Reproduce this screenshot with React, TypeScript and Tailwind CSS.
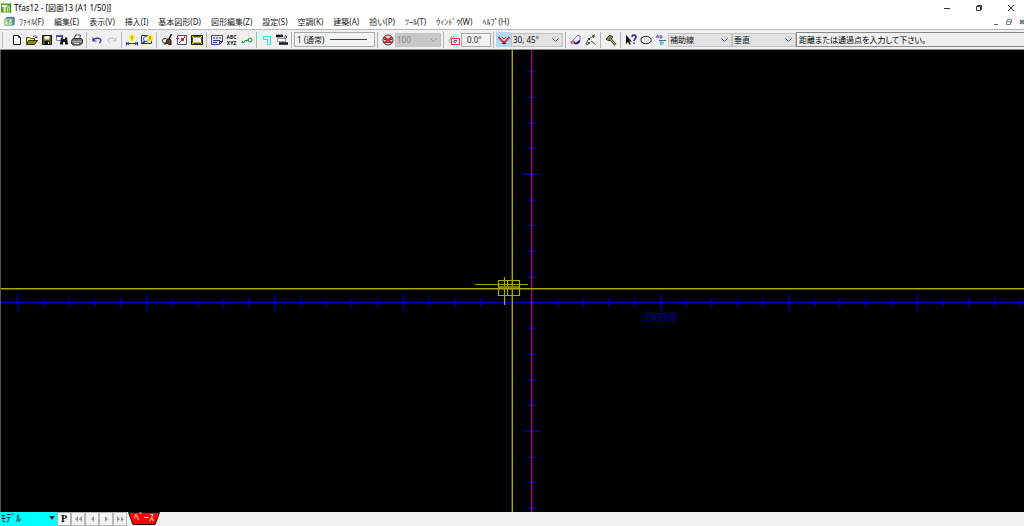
import type { ReactNode } from "react";

const menus = [
  "ﾌｧｲﾙ(F)", "編集(E)", "表示(V)", "挿入(I)", "基本図形(D)", "図形編集(Z)", "設定(S)",
  "空調(K)", "建築(A)", "拾い(P)", "ﾂｰﾙ(T)", "ｳｨﾝﾄﾞｳ(W)", "ﾍﾙﾌﾟ(H)",
];

function Tool({ label, active, children }: { label: string; active?: boolean; children: ReactNode }) {
  return (
    <button
      aria-label={label}
      className={`flex h-[15px] w-[15px] shrink-0 items-center justify-center ${active ? "bg-[#b5d7f3]" : ""}`}
    >
      <svg viewBox="0 0 12 12" className="h-3 w-3" fill="none" stroke="#222">
        {children}
      </svg>
    </button>
  );
}

function Separator() {
  return (
    <div className="flex h-4 w-[5px] shrink-0 justify-center">
      <div className="w-px bg-[#b4b4b4]" />
    </div>
  );
}

function Combo({ label, value, className, disabled }: { label: string; value: string; className: string; disabled?: boolean }) {
  return (
    <div className={`relative h-[14px] shrink-0 border ${disabled ? "border-[#c4c4c4] bg-[#c8c8c8] text-[#858585]" : "border-[#c2c2c2] bg-[#e2e2e2] text-[#111]"} ${className}`}>
      <select aria-label={label} disabled={disabled} className="block h-3 w-full appearance-none bg-transparent pl-px leading-3 opacity-100 outline-none">
        <option>{value}</option>
      </select>
      <svg viewBox="0 0 7 4" className="pointer-events-none absolute top-1 right-[3px] h-1 w-[7px]" fill="none" stroke={disabled ? "#999" : "#555"}>
        <path d="M.5.5l3 3 3-3" />
      </svg>
    </div>
  );
}

function AppIcon({ small }: { small?: boolean }) {
  return small ? (
    <svg viewBox="0 0 12 12" className="h-3 w-[11px]">
      <path d="M3 1h8v8H3z" fill="#4c8ed8" stroke="#3764a0" />
      <path d="M1 2.500h8v7H1z" fill="#e3f3c9" stroke="#5f9a86" />
      <path d="M2.500 4.500h4M4.500 4.500v4M6.500 7.500l1.500-2" stroke="#3c9a38" />
    </svg>
  ) : (
    <svg viewBox="0 0 12 12" className="h-3 w-[11px]">
      <path d="M0 1h11v10H0z" fill="#5ba51b" />
      <path d="M1 3h6v2H5v5H3V5H1z" fill="#fff" />
      <path d="M7 6l2-2v3h1v1H9v2M7 10V6" stroke="#e4f3a0" fill="none" />
      <path d="M10 1h1v10h-1z" fill="#1f7a36" />
    </svg>
  );
}

const STEP = 25.7;
const range = (from: number, to: number) => Array.from({ length: to - from + 1 }, (_, i) => from + i);

function Drawing() {
  return (
    <svg viewBox="0 0 1024 462" preserveAspectRatio="xMidYMid slice" className="h-full w-full" role="img" aria-label="図面">
      <g stroke="#0000a8" strokeWidth="1.4">
        <path d="M0 252.700h1024" />
        {range(-20, 19).filter((i) => i !== 0).map((i) => {
          const x = Math.round(531 + i * STEP) + 0.7;
          const r = i % 5 === 0 ? 8.5 : 4.5;
          return <path key={i} d={`M${x} ${252.5 - r}v${r * 2}`} />;
        })}
        {range(-9, 8).filter((i) => i !== 0).map((i) => {
          const y = Math.round(252.5 + i * STEP) + 0.3;
          const r = i % 5 === 0 ? 8.5 : 4.5;
          return <path key={i} d={`M${531.5 - r} ${y}h${r * 2}`} />;
        })}
      </g>
      <path d="M531.700 0v462" stroke="#a000a0" strokeWidth="1.4" />
      <text x="644" y="271" fill="#0000b0" fontSize="10" fontFamily="'Liberation Sans', sans-serif">250000</text>
      <g stroke="#a8a800" fill="none">
        <path d="M0 238.700h1024M512.300 0v462" strokeWidth="1.4" />
        <path d="M475 234.500h53M504.500 227v28M507.500 230v16M498.500 230.500h21v15h-21z" strokeWidth="1.2" />
        <path d="M499 236.500h20M499 237.500h20" stroke="#7c7c00" />
      </g>
      <path d="M.5 0v462" stroke="#555" />
    </svg>
  );
}

export default function App() {
  return (
    <div className="flex h-screen flex-col overflow-hidden bg-[#f0f0f0] font-['Noto_Sans','Noto_Sans_CJK_JP',sans-serif] text-[8px] leading-3 text-[#222]">
      <header className="flex h-[15px] shrink-0 items-center bg-white pl-px">
        <AppIcon />
        <h1 className="ml-0.5 flex-1 leading-[15px] whitespace-nowrap text-black">Tfas12 - [図面13 (A1 1/50)]</h1>
        <div className="flex gap-1.5">
          <button aria-label="最小化" className="flex w-[26px] justify-center">
            <svg viewBox="0 0 8 8" className="h-2 w-2" stroke="#333"><path d="M1 4.500h6" /></svg>
          </button>
          <button aria-label="元に戻す" className="flex w-[26px] justify-center">
            <svg viewBox="0 0 8 8" className="h-2 w-2" fill="none" stroke="#333"><path d="M1.500 2.500h4v4h-4zM2.500 2.500v-1h4v4h-1" /></svg>
          </button>
          <button aria-label="閉じる" className="flex w-[26px] justify-center">
            <svg viewBox="0 0 8 8" className="h-2 w-2" stroke="#333"><path d="M1 1l6 6M7 1l-6 6" /></svg>
          </button>
        </div>
      </header>

      <nav className="flex h-[14px] shrink-0 items-center bg-white pl-1">
        <AppIcon small />
        <div className="ml-1 flex flex-1 gap-[10px] whitespace-nowrap">
          {menus.map((m) => <button key={m}>{m}</button>)}
        </div>
        <div className="-mr-0.5 flex gap-[5px]">
          <button aria-label="図面を最小化" className="w-2">
            <svg viewBox="0 0 8 8" className="h-2 w-2" stroke="#52657a"><path d="M2 6.500h4" /></svg>
          </button>
          <button aria-label="図面を元に戻す" className="w-2">
            <svg viewBox="0 0 8 8" className="h-2 w-2" fill="none" stroke="#718398"><path d="M1.500 3.500h4v3h-4zM2.500 3V1.500h4v3H6" /></svg>
          </button>
          <button aria-label="図面を閉じる" className="w-2">
            <svg viewBox="0 0 8 8" className="h-2 w-2" stroke="#52657a" strokeWidth="1.500"><path d="M2 2l4 4M6 2L2 6" /></svg>
          </button>
        </div>
      </nav>

      <div role="toolbar" aria-label="ツールバー" className="flex h-[21px] shrink-0 items-center border-t border-b border-t-[#b9b9b9] border-b-[#8a8a8a] pl-0.5">
        <div className="mr-1.5 h-4 w-px shrink-0 bg-[#bbb]" />
        <Tool label="新規作成"><path d="M2.500 1.500h5l2 2v7h-7zM7.500 1.500v2h2" fill="#fff" /></Tool>
        <Tool label="開く">
          <path d="M.5 10V3.500h3l1 1h4V6" fill="#efe45c" stroke="#555014" />
          <path d="M.5 10.500l2-4h9l-3 4z" fill="#8d8414" stroke="#37340a" />
          <path d="M7 2.500c2-1.500 3-.5 3.500 1M9 3.500h2V2" stroke="#333" strokeWidth=".8" />
        </Tool>
        <Tool label="保存">
          <path d="M1.500 1.500h9v9h-9z" fill="#66661b" stroke="#111" />
          <path d="M3.500 2h5v3.500h-5z" fill="#f5f5f5" stroke="none" />
          <path d="M3.500 7h5v3.500h-5z" fill="#111" stroke="none" /><path d="M7.500 8v2" stroke="#eee" />
        </Tool>
        <Tool label="検索">
          <path d="M.5 2.500h6v4h-6z" fill="#fff" stroke="#7d88c0" /><path d="M0 2h7" stroke="#2430a0" strokeWidth="1.500" />
          <path d="M5 3.500h2V5h2V3.500h2l1 7H9V8H7v2.500H4z" fill="#111" stroke="none" />
        </Tool>
        <Tool label="印刷">
          <path d="M3 5l1.500-4h5L8.500 5" fill="#fff" stroke="#444" />
          <path d="M1 5.500L2.500 4.500h8l1 1V9l-2 2H2L.5 9.500z" fill="#777" stroke="#333" />
          <path d="M1 7.500h10" stroke="#aaa" /><path d="M3 9.500h5" stroke="#ddd" />
        </Tool>
        <Separator />
        <Tool label="元に戻す"><path d="M2 3.500v3.500h3.500M2 7c1-3.500 8-4 8-.5 0 1-1 2-2 2.500" stroke="#3030a8" strokeWidth="1.200" /></Tool>
        <Tool label="やり直し"><path d="M10 3.500v3.500H6.500M10 7C9 3.500 2 3 2 6.500c0 1 1 2 2 2.500" stroke="#bcbcbc" /></Tool>
        <Separator />
        <Tool label="寸法">
          <path d="M6 0l2.500 2v3L7 7H5L3.500 5V2z" fill="#fff200" stroke="none" /><path d="M6 2v3.500" stroke="#8c7900" />
          <path d="M.5 8v3.500M11.500 8v3.500M1 9.500h10" stroke="#3030a8" /><path d="M3 8L1 9.500 3 11M9 8l2 1.500L9 11" stroke="#3030a8" strokeWidth=".8" />
        </Tool>
        <Tool label="図面表示">
          <path d="M.5 1.500h10v8H.5z" fill="#dbe4ff" stroke="#2838a8" />
          <path d="M1 10l4-4" stroke="#222" strokeWidth="1.500" /><circle cx="5" cy="5" r="2.500" fill="#fff" stroke="#4050b5" />
          <path d="M9 0l3 2v4L9 8 6 6V2z" fill="#ffee16" stroke="none" /><path d="M9 2v3.500" stroke="#665800" />
        </Tool>
        <Separator />
        <Tool label="再描画">
          <path d="M10.500 0L8 5" stroke="#111" strokeWidth="1.500" /><path d="M6 5l4 1v5L5 9z" fill="#80391d" stroke="#221208" />
          <path d="M5 4.500C2 4 1 6 1.500 7.500S3 9.500 5 9.500M3.500 8L5 9.500 3.500 11" stroke="#222" />
        </Tool>
        <Tool label="部分拡大">
          <path d="M1.500 1.500h9v9h-9z" fill="#fff" stroke="#50508c" />
          <path d="M0 4.500h3M8.500 1v3" stroke="#d42525" /><path d="M3 9l4-4" stroke="#444" /><path d="M5 4h3v3H5z" fill="#d52b2b" stroke="none" />
        </Tool>
        <Tool label="全体表示">
          <path d="M.5 1.500h11v9H.5z" fill="#5f5b0b" stroke="#222" /><path d="M3 3.500h6l1 1v3l-1 1H3l-1-1v-3z" fill="#fff" stroke="none" />
          <path d="M1 2l2 2M11 2L9 4M1 10l2-2M11 10L9 8" stroke="#fff23b" />
        </Tool>
        <Separator />
        <Tool label="文字">
          <path d="M.5 1.500h11v6l-3 3h-8z" fill="#e5e7ff" stroke="#4444a0" /><path d="M2 4h2M5 4h2M8 4h2M2 6.500h7M2 8.500h4" stroke="#303090" /><path d="M8.500 10.500v-3h3" stroke="#333" />
        </Tool>
        <button aria-label="文字置換" className="flex h-[15px] w-[15px] shrink-0 flex-col items-center justify-center text-[5px] leading-[6px] font-bold text-[#222]">
          <span>ABC</span><span>XYZ</span>
        </button>
        <Tool label="接続"><path d="M1 8.500h2l1-2h3" stroke="#209447" /><circle cx="9" cy="6" r="2" stroke="#209447" /><circle cx="1.500" cy="8" r=".7" stroke="#209447" /></Tool>
        <Separator />
        <Tool label="ダクト"><path d="M2.500 2.500h7v8h-3v-5h-4z" fill="#d5ffff" stroke="#32dcea" /></Tool>
        <Tool label="線種">
          <path d="M0 2h7M3 9.500h9" stroke="#111" strokeWidth="2.500" /><path d="M1.500 4.500h8v3h-8z" stroke="#999" fill="#fff" /><path d="M9 1l2 2-2 2M11 3H8" stroke="#4242a6" />
        </Tool>
        <Separator />
        <button aria-label="線の太さ" className="flex h-[15px] w-[81px] shrink-0 items-center gap-1.5 border border-[#aaa] bg-[#f3f3f3] pr-[7px] pl-0.5 whitespace-nowrap">
          <span>1 (通常)</span><span className="h-px flex-1 bg-[#444]" />
        </button>
        <Separator />
        <Tool label="縮尺解除">
          <circle cx="6" cy="6" r="5" fill="#ddd" stroke="#333" /><path d="M2 5.500h8M3 8.500h6" stroke="#444" /><path d="M2 3l8 6M10 3L2 9" stroke="#c52626" strokeWidth="1.800" />
        </Tool>
        <Combo label="縮尺" value="100" className="w-[46px]" disabled />
        <Separator />
        <Tool label="角度設定"><path d="M.5 7l4-5 3 2.500M1 7.500l3 2" stroke="#999" /><path d="M3.500 4.500h8v6h-8z" fill="#ffe9e9" stroke="#e93838" /><path d="M6 9V6.500h3L7 9" stroke="#3342b8" strokeWidth=".8" /></Tool>
        <input aria-label="角度" defaultValue="0.0°" className="h-[14px] w-[30px] shrink-0 border border-[#a8a8a8] bg-[#f3f3f3] pl-[5px] outline-none" />
        <Separator />
        <Tool label="角度拘束" active>
          <path d="M.5 3l5.500 6 5.500-6" stroke="#e04848" strokeWidth="2.400" /><path d="M1 3l2 2M4 3l2 2 2-2M9 5l2-2" stroke="#804a62" /><path d="M6 7v3M4 9.500h4" stroke="#4a2a35" />
        </Tool>
        <Combo label="拘束角度" value="30, 45°" className="w-[52px]" />
        <Separator />
        <Tool label="消去"><path d="M3 6l5-5 2 1v4L6 9H2z" fill="#f7f7ff" stroke="#7d7dc0" /><path d="M.5 7.500l3-1 2 2 5-3c0 3-2 5-5 5z" fill="#353599" stroke="none" /><path d="M0 7h4v3H1z" fill="#d27979" stroke="none" /></Tool>
        <Tool label="線編集"><path d="M1 10c1-4 4-7 9-8M10 1L7 2l2 2M2 8l3 1-4 2M6 7l4 3M3 4l2 2" stroke="#3d493d" /><path d="M8 8l3 3" stroke="#5b9f58" /></Tool>
        <Separator />
        <Tool label="設定"><path d="M1 5l4-4 3 2-4 4z" fill="#868654" stroke="#3d3d20" /><path d="M5.500 5l5 6" stroke="#35351c" strokeWidth="2.500" /><path d="M5.500 5l5 6" stroke="#d3cf91" /></Tool>
        <Separator />
        <Tool label="ヘルプ">
          <path d="M1 1v9l2-2 1.500 3 1.500-1-1.500-2.500H7z" fill="#111" stroke="none" /><path d="M7 3c0-3 4-2 4 0S9 5 9 7M9 8.500v1.500" stroke="#262696" strokeWidth="1.600" />
        </Tool>
        <Tool label="多角形"><path d="M4 2.500h4l3 2v3l-3 2H4l-3-2v-3z" stroke="#333" /></Tool>
        <Tool label="属性"><path d="M1 4l1.500-3L4 4M1.500 3h2M5 1v3h2V2H5" stroke="#3c42b0" strokeWidth=".8" /><path d="M4 6.500h7M6 6v5M6 9h3" stroke="#347286" /><path d="M7 8v3" stroke="#38dce8" strokeWidth="1.500" /></Tool>
        <Combo label="線の種類" value="補助線" className="w-16" />
        <Combo label="方向" value="垂直" className="w-16" />
        <output className="h-[15px] min-w-0 flex-1 overflow-hidden border border-r-0 border-[#888] bg-[#efefef] pl-0.5 leading-[13px] [font-feature-settings:'palt'] whitespace-nowrap text-black">
          距離または通過点を入力して下さい。
        </output>
      </div>

      <main className="min-h-0 flex-1 bg-black"><Drawing /></main>

      <footer className="flex h-[14px] shrink-0 items-stretch bg-[#f0f0f0]">
        <div className="relative w-[57px] shrink-0 bg-[#00ffff]">
          <select aria-label="モデル" className="block h-[13px] w-full appearance-none bg-transparent pl-px text-[10px] leading-[13px] text-black outline-none"><option>ﾓﾃﾞﾙ</option></select>
          <svg viewBox="0 0 6 4" className="pointer-events-none absolute top-1 right-0.5 h-1 w-1.5"><path d="M0 0h6L3 4z" fill="#003030" /></svg>
        </div>
        <button aria-label="ページ" className="w-[14px] border border-[#aaa] bg-[#f5f5f5] font-['Liberation_Serif',serif] text-[10px] leading-3 font-bold text-black">P</button>
        {[
          ["最初", "M5 1L2 4l3 3zM9 1L6 4l3 3z"], ["前へ", "M7 1L4 4l3 3z"],
          ["次へ", "M4 1l3 3-3 3z"], ["最後", "M2 1l3 3-3 3zM6 1l3 3-3 3z"],
        ].map(([label, d]) => (
          <button key={label} aria-label={label} className="flex w-[14px] items-center justify-center border border-[#b8b8b8] bg-[#f2f2f2]">
            <svg viewBox="0 0 11 8" className="h-2 w-[11px]" fill="#999"><path d={d} /></svg>
          </button>
        ))}
        <button className="ml-px grid w-8 place-items-center text-white">
          <svg viewBox="0 0 32 14" className="col-start-1 row-start-1 h-[14px] w-8"><path d="M.5.5h31l-4.500 12H5z" fill="#f00" stroke="#300" /></svg>
          <span className="col-start-1 row-start-1 mb-1 text-[10px] leading-[10px]">ﾍﾞｰｽ</span>
        </button>
      </footer>
    </div>
  );
}
